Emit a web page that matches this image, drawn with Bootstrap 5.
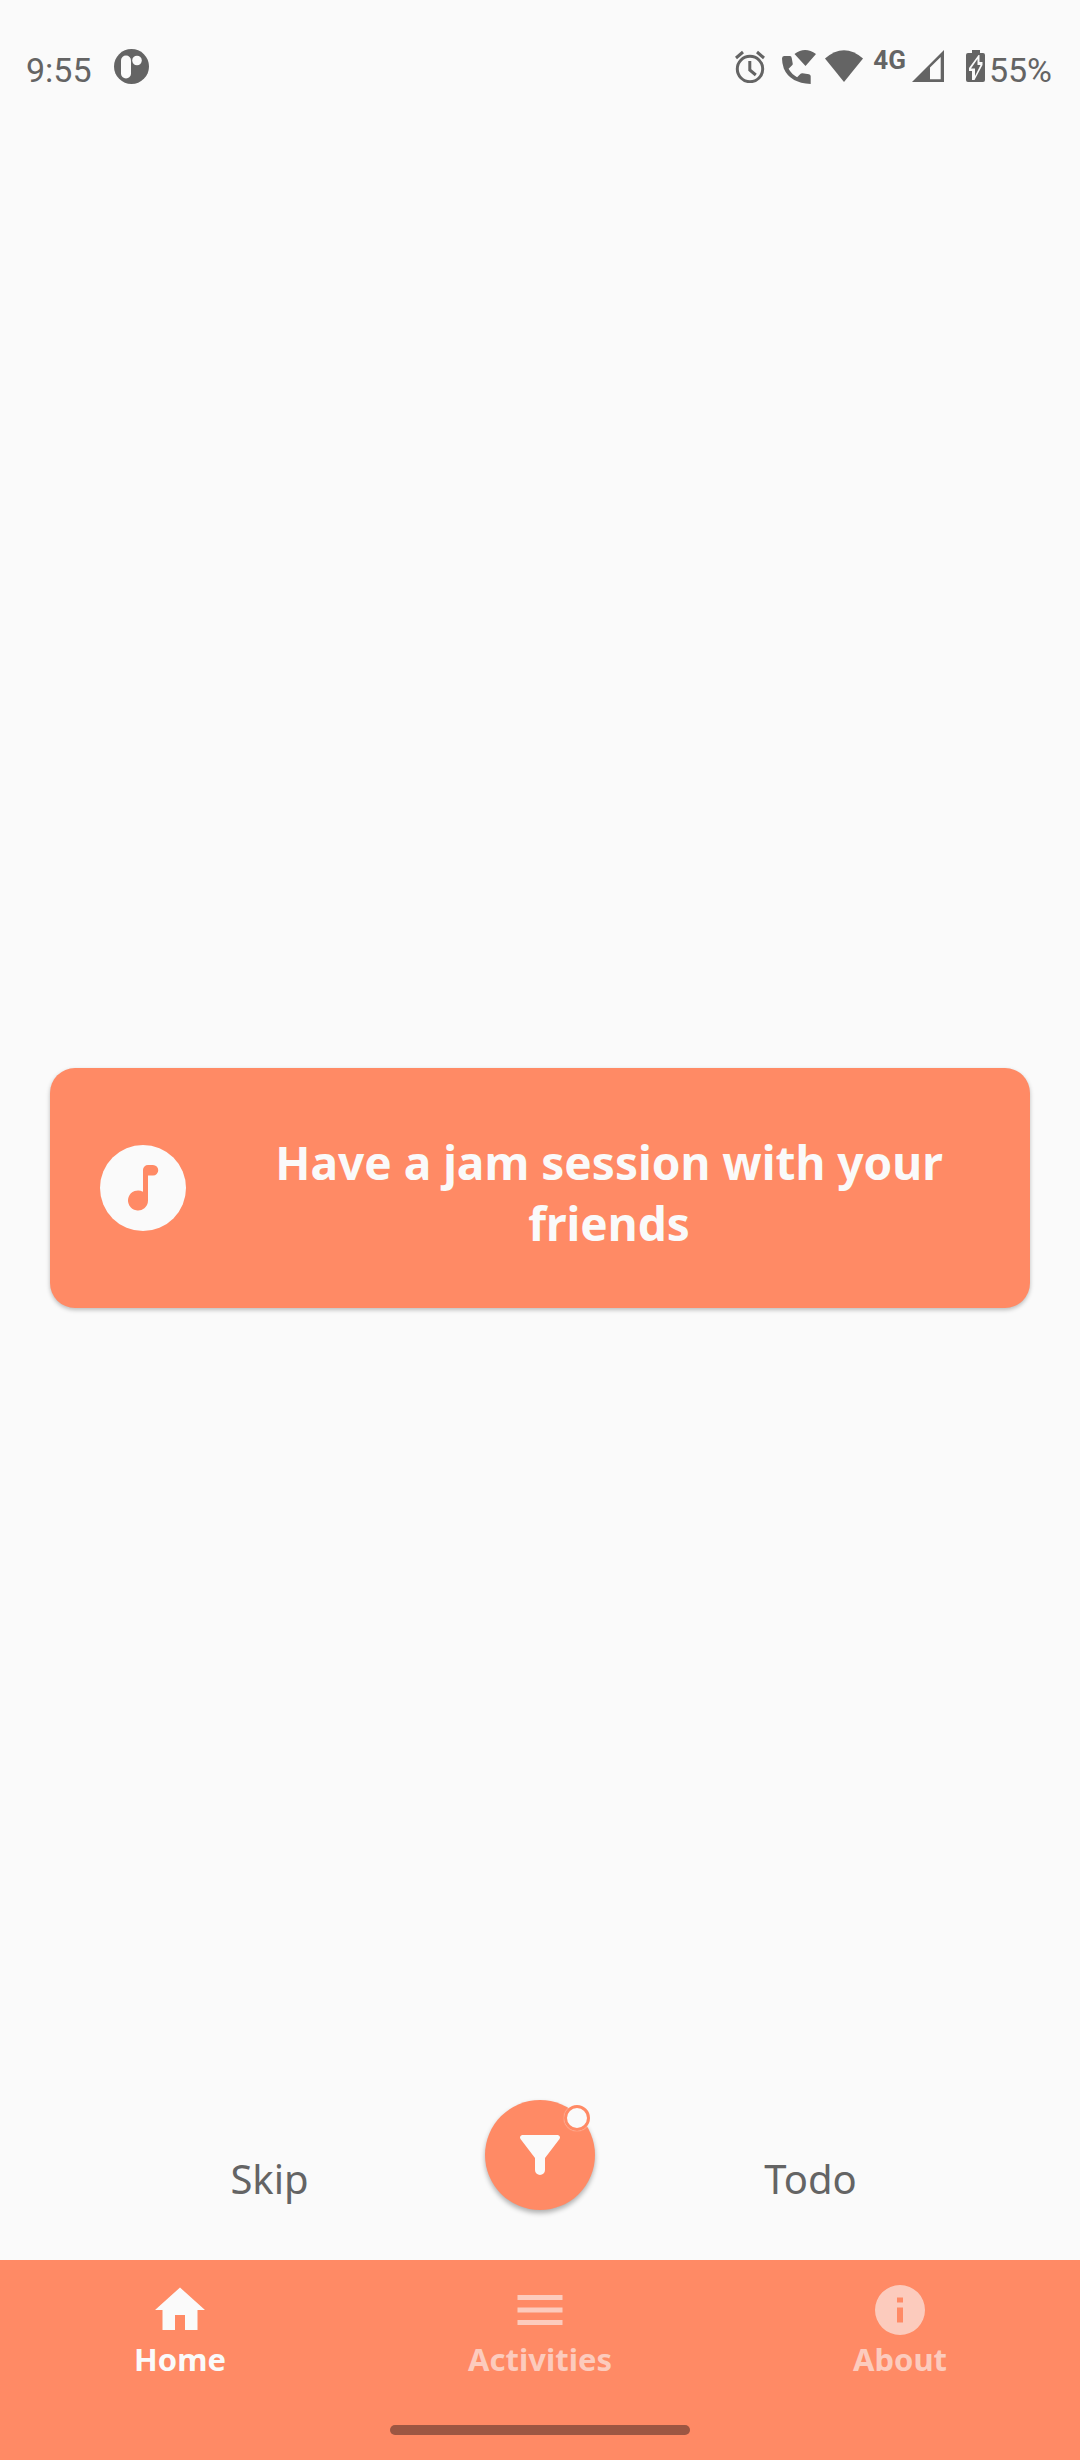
<!DOCTYPE html>
<html lang="en">
<head>
<meta charset="utf-8">
<meta name="viewport" content="width=device-width, initial-scale=1">
<title>Home</title>
<link href="https://cdn.jsdelivr.net/npm/bootstrap@5.3.0/dist/css/bootstrap.min.css" rel="stylesheet">
<style>
  body { background: #fafafa; color: #646464; font-family: "Noto Sans", sans-serif; }
  svg { display: block; flex: none; fill: currentColor; }
  .status-bar { height: 132px; padding: 0 28px 0 26px; font: 34px/40px Roboto, sans-serif; }
  .status-bar .readout { padding-top: 7px; }
  .status-bar .network { font-size: 26px; font-weight: 700; line-height: 30px; margin: 0 6px 12px 10px; }
  .notice { margin-left: 22px; }
  .handset { margin-right: 9px; }
  .stage { padding: 194px 50px 0; }
  .idea { min-height: 240px; padding: 50px; border: 0; border-radius: 25px; background: #ff8a65; color: #fafafa; box-shadow: 0 2px 4px rgba(0,0,0,.25); }
  .idea h1 { margin: 0 0 0 52px; padding-top: 9px; font-size: 46px; font-weight: 700; line-height: 61px; }
  .actions { height: 210px; padding-top: 50px; }
  .choice-start { padding-left: 54px; }
  .choice-end { padding-right: 54px; }
  .choice { color: #646464; font-size: 40px; line-height: 54px; margin-top: 52px; padding: 0; border: 0; }
  .filter { width: 110px; height: 110px; padding: 0; border: 0; background: #ff8a65; color: #fafafa; box-shadow: 0 3px 5px rgba(0,0,0,.3); }
  .filter:hover { background: #ff8a65; color: #fafafa; }
  .dot { top: 5px; right: 5px; width: 26px; height: 26px; border: 3px solid #ff8a65; background: #fafafa; box-shadow: 0 0 1px #fafafa; }
  .tabs { background: #ff8a65; padding-top: 20px; }
  .tabs .nav-link { flex: 1 1 0; padding: 0; color: #fccbbd; font-size: 31px; font-weight: 700; line-height: 38px; }
  .tabs .nav-link.active { color: #fafafa; }
  .gesture { width: 300px; height: 10px; margin: 47px auto 25px; background: #9c5642; }
</style>
</head>
<body>
<div class="d-flex flex-column min-vh-100">
  <header class="status-bar d-flex align-items-center">
    <span class="readout">9:55</span>
    <svg class="notice" width="35" height="35" viewBox="0 0 35 35" aria-hidden="true"><circle cx="17.500" cy="17.500" r="17.500"/><rect x="7" y="6.500" width="10" height="23" rx="5" fill="#fafafa"/><circle cx="23" cy="11.500" r="4.800" fill="#fafafa"/></svg>
    <div class="d-flex align-items-center ms-auto">
      <svg width="32" height="34" viewBox="0 0 32 34" aria-hidden="true"><g fill="none" stroke="currentColor" stroke-width="3"><circle cx="16" cy="20" r="12.700"/><path d="M15.800 12v9l6 5M2 9l7-6M30 9l-7-6"/></g></svg>
      <svg class="handset ms-3" width="34" height="36" viewBox="0 0 34 36" aria-hidden="true"><path d="M0 10.500Q0 8 2 8h6q1.500 0 1.700 2l1 5.500q.2 1-.6 1.800l-3.500 3.500q3 5.500 8.500 8.500l3.500-3.500q.8-.8 1.800-.6l6.600 1.100q1.700.3 1.700 2V36Q8 35 1.800 20.500Q0 15 0 10.500zM12.500 6Q23-2 34 6L23.500 18z"/></svg>
      <svg width="38" height="32" viewBox="0 0 38 32" aria-hidden="true"><path d="M0 8.500Q19-8 38 8.500L19 32z"/></svg>
      <span class="network">4G</span>
      <svg width="32" height="32" viewBox="0 0 32 32" aria-hidden="true"><path fill-rule="evenodd" d="M0 32L32 0v32zM18 17.500v11.700h10.700V7z"/></svg>
      <svg class="notice" width="19" height="32" viewBox="0 0 19 32" aria-hidden="true"><path d="M6 0h8v3h3q2 0 2 2v25q0 2-2 2H2q-2 0-2-2V5q0-2 2-2h4z"/><path fill="#fafafa" d="M12.500 5L3 18v3h3v9h2.500L16.500 15v-3h-3V5z"/><path d="M11.500 9L5 18.500h4V26l5.500-11h-3z"/></svg>
      <span class="readout ms-1">55%</span>
    </div>
  </header>

  <main class="flex-grow-1 d-flex flex-column">
    <section class="stage flex-grow-1 d-flex flex-column justify-content-center">
      <article class="card idea flex-row align-items-center">
        <svg width="86" height="86" viewBox="0 0 86 86" aria-hidden="true"><circle cx="43" cy="43" r="43"/><path fill="#ff8a65" d="M43 25a5 5 0 0 1 5-5h5a5 5 0 0 1 0 10.500h-5v25a10 10 0 1 1-5-8.700z"/></svg>
        <h1 class="flex-grow-1 text-center">Have a jam session with your friends</h1>
      </article>
    </section>
    <section class="actions d-flex align-items-start">
      <div class="col text-center choice-start"><button class="btn choice" type="button">Skip</button></div>
      <button class="btn filter rounded-circle position-relative d-flex align-items-center justify-content-center" type="button" aria-label="Filter activities">
        <svg width="40" height="40" viewBox="0 0 40 40" aria-hidden="true"><path d="M2 0h36q3 1 1.500 4L25 23v12a5 5 0 0 1-10 0V23L.5 4Q-1 1 2 0z"/></svg>
        <span class="dot position-absolute rounded-circle"></span>
      </button>
      <div class="col text-center choice-end"><button class="btn choice" type="button">Todo</button></div>
    </section>
  </main>

  <nav class="tabs" aria-label="Main">
    <div class="nav flex-nowrap">
      <a class="nav-link active d-flex flex-column align-items-center" href="#" aria-current="page"><svg width="60" height="60" viewBox="0 0 24 24" aria-hidden="true"><path d="M10 20v-6h4v6h5v-8h3L12 3 2 12h3v8z"/></svg>Home</a>
      <a class="nav-link d-flex flex-column align-items-center" href="#"><svg width="60" height="60" viewBox="0 0 24 24" aria-hidden="true"><path d="M3 18h18v-2H3zm0-5h18v-2H3zm0-7v2h18V6z"/></svg>Activities</a>
      <a class="nav-link d-flex flex-column align-items-center" href="#"><svg width="60" height="60" viewBox="0 0 24 24" aria-hidden="true"><path fill-rule="evenodd" d="M12 2a10 10 0 1 0 0 20 10 10 0 0 0 0-20zm-1.200 5h2.400v2h-2.400zm0 4h2.400v6h-2.400z"/></svg>About</a>
    </div>
    <div class="gesture rounded-pill"></div>
  </nav>
</div>
<script src="https://cdn.jsdelivr.net/npm/bootstrap@5.3.0/dist/js/bootstrap.bundle.min.js"></script>
</body>
</html>
